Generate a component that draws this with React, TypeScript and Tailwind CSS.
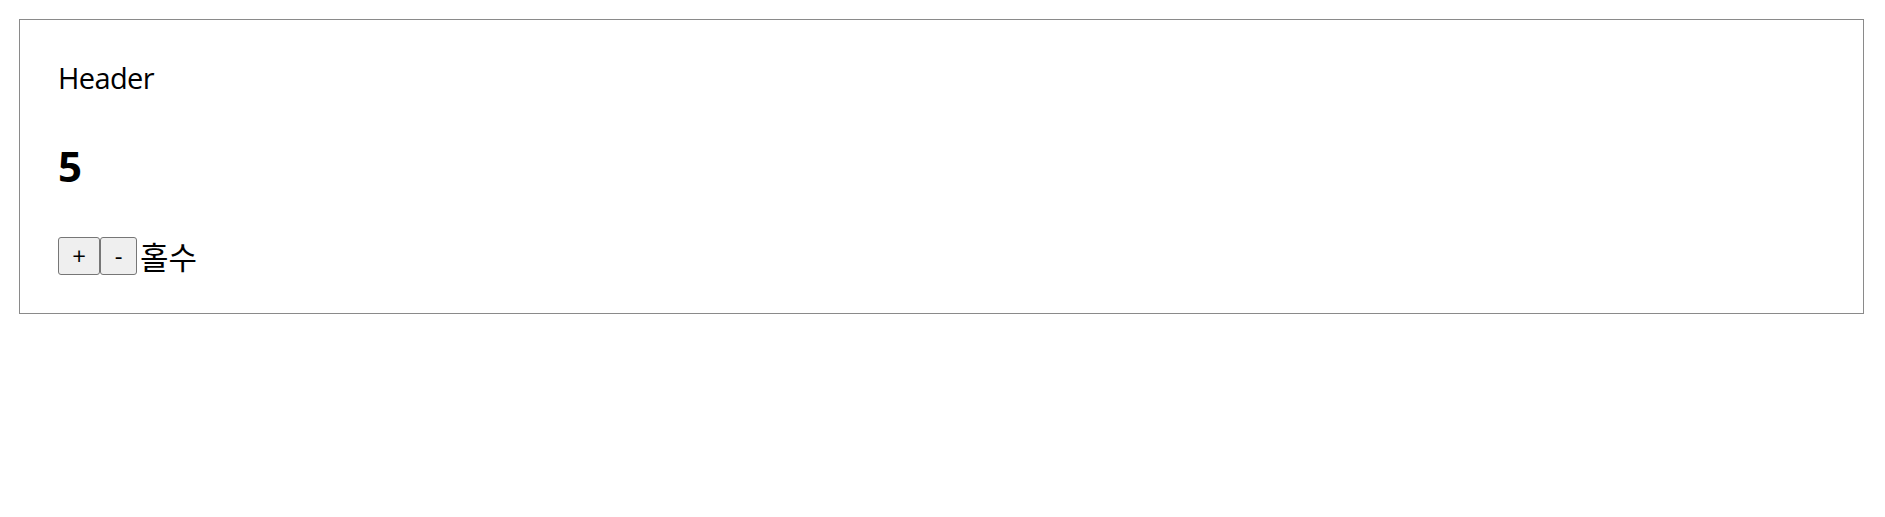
import React, { useState } from "react";

const App = () => {
  const [count, setCount] = useState(5);

  return (
    <div className="min-h-[517px] bg-white pt-[19px] pl-[19px] font-['Open_Sans','Noto_Sans_CJK_KR',sans-serif] text-black">
      <div className="w-[1845px] h-[295px] border border-[#8a8a8a] pl-[38px] pt-[38px] flex flex-col">
        <p className="text-[29px] leading-[40px] tracking-[-0.6px]">Header</p>
        <h1 className="mt-[43px] text-[42px] leading-[50px] font-bold">{count}</h1>
        <div className="mt-[46px] flex items-center">
          <button
            onClick={() => setCount(count + 1)}
            className="w-[42px] h-[38px] bg-[#efefef] border border-[#767676] rounded-[3px] text-[24px] leading-none font-medium font-['Open_Sans',sans-serif]"
          >
            +
          </button>
          <button
            onClick={() => setCount(count - 1)}
            className="w-[37px] h-[38px] bg-[#efefef] border border-[#767676] rounded-[3px] text-[24px] leading-none font-medium font-['Open_Sans',sans-serif]"
          >
            -
          </button>
          <span className="ml-[3px] text-[31px] leading-[38px] font-['Noto_Sans_CJK_KR',sans-serif]">
            {count % 2 === 0 ? "짝수" : "홀수"}
          </span>
        </div>
      </div>
    </div>
  );
};

export default App;
